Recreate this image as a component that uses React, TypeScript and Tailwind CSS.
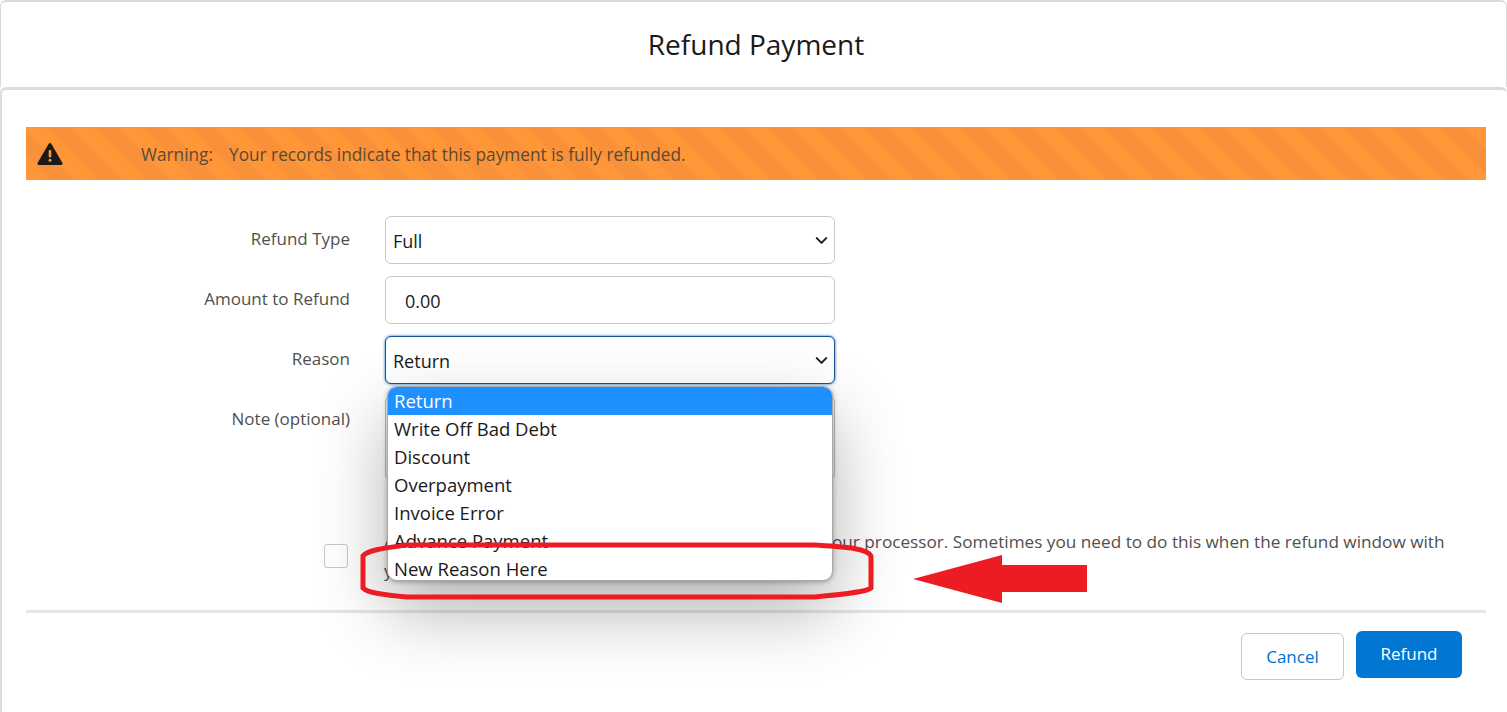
import React from 'react';
import { ChevronDown } from 'lucide-react';

const reasons = ['Return', 'Write Off Bad Debt', 'Discount', 'Overpayment', 'Invoice Error', 'Advance Payment', 'New Reason Here'];

const Field = ({ label, children }: { label: string; children: React.ReactNode }) => (
  <div className="flex items-start">
    <label className="w-[324px] pt-[11px] text-right text-[17px] leading-6 text-[#514f4d]">{label}</label>
    <div className="ml-[35px] w-[450px]">{children}</div>
  </div>
);

const SelectBox = ({ value, focused }: { value: string; focused?: boolean }) => (
  <div
    className={`flex h-12 items-center justify-between rounded-[6px] border bg-white pl-[7px] pr-[3px] text-[18px] text-[#1a1a1a] ${
      focused ? 'border-[#1b5297] shadow-[0_0_3px_#0070d2]' : 'border-[#c9c7c5]'
    }`}
  >
    <span className="pt-[2px]">{value}</span>
    <ChevronDown size={19} strokeWidth={2.6} className="text-[#1f1f1f]" />
  </div>
);

export default function App() {
  return (
    <div className="relative h-[712px] w-[1507px] overflow-hidden bg-white font-['Open_Sans',sans-serif]">
      <header className="flex h-[87px] items-center justify-center rounded-t-[6px] border border-b-0 border-t-2 border-[#dddbda] pb-[2px] pl-[5px] text-[28px] text-[#1a1a1a]">
        Refund Payment
      </header>

      <main className="relative h-[625px] rounded-t-[6px] border-t-[3px] border-l-2 border-[#dcdcdc] pl-[24px] pr-[21px] pt-[37px]">
        <div className="flex h-[53px] items-center bg-[repeating-linear-gradient(45deg,#ff9638_0px,#ff9638_17px,#f8913a_17px,#f8913a_34px)] pl-[11px] text-[17.25px] text-[#5c4a32]">
          <svg width="26" height="24" viewBox="0 0 26 24">
            <path d="M13 2.5 L24 21.5 H2 Z" fill="#1a1a1a" stroke="#1a1a1a" strokeWidth="3" strokeLinejoin="round" />
            <rect x="11.7" y="8" width="2.6" height="7.5" rx="1" fill="#ff9638" />
            <circle cx="13" cy="18.2" r="1.5" fill="#ff9638" />
          </svg>
          <span className="ml-[78px] pt-[2px]">Warning:</span>
          <span className="ml-[16px] pt-[2px]">Your records indicate that this payment is fully refunded.</span>
        </div>

        <div className="mt-[36px] flex flex-col gap-3">
          <Field label="Refund Type">
            <SelectBox value="Full" />
          </Field>
          <Field label="Amount to Refund">
            <div className="flex h-12 items-center rounded-[6px] border border-[#c9c7c5] bg-white pl-[19px] pt-[2px] text-[18px] text-[#1a1a1a]">0.00</div>
          </Field>
          <Field label="Reason">
            <SelectBox value="Return" focused />
          </Field>
          <Field label="Note (optional)">
            <div className="h-[84px] rounded-[6px] border border-[#c9c7c5] bg-white" />
          </Field>
        </div>

        <div className="mt-[11px] flex items-start pl-[298px]">
          <div className="mt-[53px] h-6 w-6 shrink-0 rounded-[3px] border border-[#c9c7c5] bg-white" />
          <p className="ml-[36px] mt-[36px] w-[1085px] text-[17.2px] leading-[29px] text-[#514f4d]">
            Approve this refund in Salesforce without sending it to your processor. Sometimes you need to do this when the refund window with your processor has closed.
          </p>
        </div>

        <div className="absolute left-[24px] top-[520px] h-[3px] w-[1460px] bg-[#e5e5e5]" />

        <div className="absolute left-[1239px] top-[541px] flex items-start gap-3">
          <button className="mt-[2px] h-[47px] w-[103px] rounded-[6px] border border-[#c9c7c5] bg-white text-[17px] text-[#0070d2]">Cancel</button>
          <button className="h-[47px] w-[106px] rounded-[6px] bg-[#0176d3] pb-[1px] text-[17px] text-white">Refund</button>
        </div>
      </main>

      {/* open dropdown of the Reason select */}
      <ul className="absolute left-[387px] top-[386px] h-[195px] w-[446px] overflow-hidden rounded-[10px] border border-[#a8a8a8] bg-white text-[18.5px] leading-[28px] text-[#1a1a1a] shadow-[0_1px_5px_rgba(0,0,0,0.3),0_30px_70px_rgba(0,0,0,0.3)]">
        {reasons.map((reason, i) => (
          <li key={reason} className={`h-[28px] pl-[6px] ${i === 0 ? 'bg-[#1e90ff] text-white' : ''}`}>
            {reason}
          </li>
        ))}
      </ul>

      {/* hand drawn annotation */}
      <svg className="absolute left-[355px] top-[538px]" width="525" height="66" viewBox="0 0 525 66" fill="none">
        <path
          d="M52 7 L459 7 C490 9 512 10 516 18 L516 50 C512 54 490 56 459 59 L52 59 C30 57 12 55 8 50 L8 18 C12 12 30 10 52 7 Z"
          stroke="#ed1c24"
          strokeWidth="5"
        />
      </svg>
      <svg className="absolute left-[910px] top-[553px]" width="180" height="52" viewBox="0 0 180 52">
        <path d="M3 26 L92 2 L92 12 L177 12 L177 39 L92 39 L92 50 Z" fill="#ed1c24" />
      </svg>
    </div>
  );
}
